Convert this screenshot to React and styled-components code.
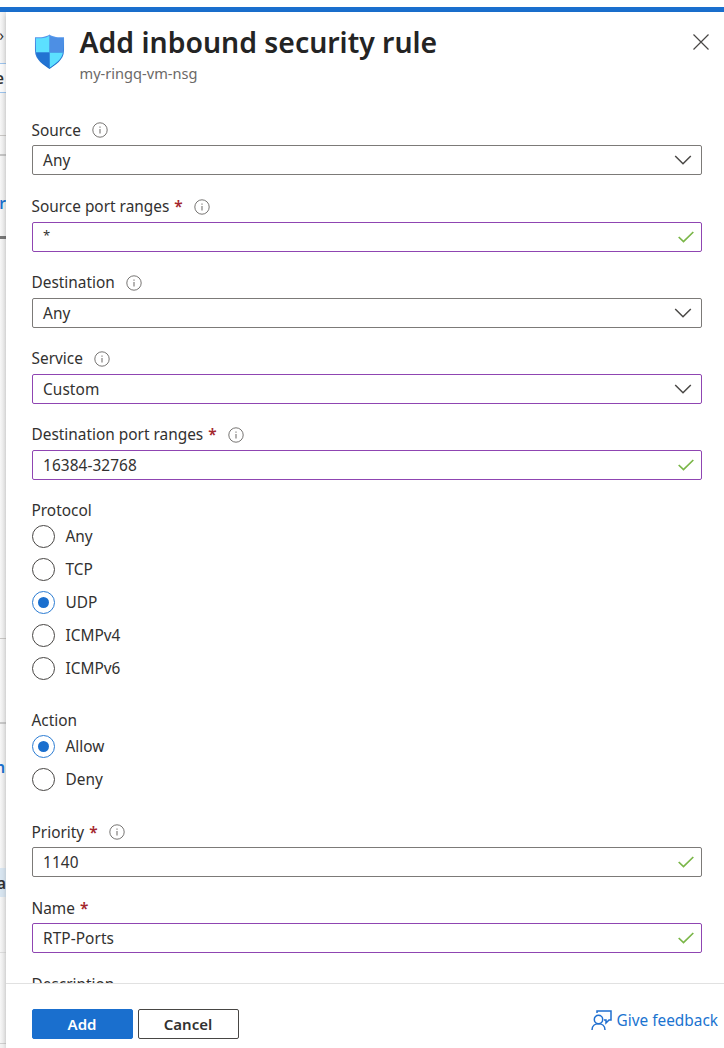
import React from 'react';
import styled, { createGlobalStyle } from 'styled-components';

const GlobalStyle = createGlobalStyle`
* { box-sizing: border-box; }
body {
  margin: 0;
  background: #fff;
  color: #323130;
  font-family: "Noto Sans", "Open Sans", sans-serif;
  font-size: 15.4px;
  line-height: 20px;
}
`

const Page = styled.div`
height: 1048px;
padding-top: 7px;
display: flex;
flex-direction: column;
overflow: hidden;
`

const TopBar = styled.div`
flex: none;
height: 5px;
background: #1a6fce;
`

const Main = styled.div`
flex: 1;
min-height: 0;
display: flex;
`

const Strip = styled.div`
width: 6px;
flex: none;
display: flex;
flex-direction: column;
overflow: hidden;
background: #f3f3f3;
`

const Slice = styled.div`
flex: none;
height: ${p => p.$h}px;
padding-top: ${p => p.$top || 0}px;
padding-right: ${p => p.$right || 0}px;
display: flex;
align-items: center;
justify-content: flex-end;
overflow: hidden;
background: ${p => p.$bg || 'linear-gradient(90deg, #f7f7f7, #e9e9e9)'};
border-bottom: ${p => p.$line || 'none'};
color: ${p => p.$color || '#323130'};
font-weight: ${p => p.$bold ? 600 : 400};
`

const Panel = styled.section`
flex: 1;
min-width: 0;
display: flex;
flex-direction: column;
background: #fff;
box-shadow: 0 3px 5px rgba(0, 0, 0, 0.2);
`

const Header = styled.header`
flex: none;
height: 105px;
padding: 22px 15px 0 27.5px;
display: flex;
align-items: flex-start;
`

const Titles = styled.div`
flex: 1;
margin-left: 15px;
margin-top: -9px;
`

const Title = styled.h1`
margin: 0;
font-size: 28.4px;
line-height: 34px;
font-weight: 600;
color: #242424;
white-space: nowrap;
`

const Subtitle = styled.div`
margin-top: 5px;
font-size: 14.6px;
line-height: 18px;
color: #6b6967;
`

const Close = styled.button`
margin: 0;
padding: 0;
border: 0;
background: none;
display: flex;
`

const Form = styled.div`
flex: 1;
min-height: 0;
overflow: hidden;
padding: 0 22px 0 25.5px;
`

const Field = styled.div`
height: ${p => p.$h}px;
`

const Label = styled.div`
height: 28px;
padding-bottom: 1px;
display: flex;
align-items: center;
white-space: nowrap;
`

const Star = styled.span`
margin-left: 5px;
color: #a4262c;
font-weight: 600;
`

const Info = styled.svg`
margin: 0 0 1px 11px;
`

const Box = styled.div`
height: 30px;
padding: 0 7px 0 10.5px;
display: flex;
align-items: center;
justify-content: space-between;
border: 1px solid ${p => p.$edited ? '#8f45b2' : '#7c7a78'};
border-radius: 2px;
`

const Value = styled.span`
padding-top: 1.5px;
letter-spacing: 0.08px;
`

const Wildcard = styled.span`
padding-bottom: 3px;
font-size: 13px;
`

const Group = styled.div`
height: ${p => p.$h}px;
padding-top: 3px;
`

const GroupLabel = styled.div`
height: 24.5px;
line-height: 20px;
`

const Option = styled.div`
height: 32.9px;
display: flex;
align-items: flex-start;
line-height: 24px;
`

const Circle = styled.span`
width: 23px;
height: 23px;
margin: 0 10.5px 0 0.5px;
border: 1.5px solid ${p => p.$on ? '#2b7cd3' : '#484644'};
border-radius: 50%;
display: flex;
align-items: center;
justify-content: center;
`

const Dot = styled.span`
width: 11px;
height: 11px;
border-radius: 50%;
background: #1a6fce;
`

const Footer = styled.footer`
flex: none;
height: 65.5px;
padding: 25.5px 6px 0 25.5px;
border-top: 1px solid #e1e1e1;
display: flex;
align-items: flex-start;
`

const Button = styled.button`
width: 101px;
height: 30px;
margin: 0 5px 0 0;
padding: 0 0 1px;
border: 1px solid ${p => p.$primary ? '#1a6fce' : '#484644'};
border-radius: 2px;
background: ${p => p.$primary ? '#1a6fce' : '#fff'};
color: ${p => p.$primary ? '#fff' : '#323130'};
font: 600 15px "Noto Sans", sans-serif;
`

const Feedback = styled.a`
margin-left: auto;
margin-top: 1px;
display: flex;
align-items: center;
gap: 4px;
color: #1a73d0;
white-space: nowrap;
`

const ChevronIcon = styled.svg`
margin-right: 2px;
`

function Shield() {
  return (
    <svg width="31" height="36" viewBox="0 0 32 37">
      <defs>
        <linearGradient id="edge" x1="0" y1="0" x2="0" y2="1">
          <stop offset="0" stopColor="#5a9bee" />
          <stop offset="1" stopColor="#1768c8" />
        </linearGradient>
        <clipPath id="inside">
          <path d="M16 1.7C12.3 4.4 7.2 4.4 2 4.4V17C2 26.2 10.8 31.2 16 35C21.2 31.2 30 26.2 30 17V4.4C24.8 4.4 19.7 4.4 16 1.7Z" />
        </clipPath>
      </defs>
      <path d="M16 .5C12.3 3.4 6.8 3.4 1 3.4V17C1 27 10.5 32 16 36C21.5 32 31 27 31 17V3.4C25.2 3.4 19.7 3.4 16 .5Z" fill="url(#edge)" />
      <g clipPath="url(#inside)">
        <path d="M0 0H16V19H0ZM16 19H32V37H16Z" fill="#5ce0ff" />
        <path d="M16 0H32V19H16Z" fill="#4d8fe4" />
        <path d="M0 19H16V37H0Z" fill="#2273d2" />
      </g>
    </svg>
  )
}

function InfoIcon() {
  return (
    <Info width="16" height="16" viewBox="0 0 16 16" fill="none" stroke="#777573">
      <circle cx="8" cy="8" r="7.2" />
      <path d="M8 7V11.5M8 4.6V5.8" strokeWidth="1.1" />
    </Info>
  )
}

function Chevron() {
  return (
    <ChevronIcon width="18" height="12" viewBox="0 0 18 12" fill="none" stroke="#4a4846" strokeWidth="1.5">
      <path d="M1.2 2L9 9.8L16.8 2" />
    </ChevronIcon>
  )
}

function Check() {
  return (
    <svg width="16" height="12" viewBox="0 0 16 12" fill="none" stroke="#7ab648" strokeWidth="1.7">
      <path d="M.7 6L5.5 10.6L15.3 1" />
    </svg>
  )
}

function FormField({ label, value, required, info, select, edited, height = 76 }) {
  return (
    <Field $h={height}>
      <Label>
        {label}
        {required && <Star>*</Star>}
        {info && <InfoIcon />}
      </Label>
      <Box $edited={edited}>
        {value === '*' ? <Wildcard>*</Wildcard> : <Value>{value}</Value>}
        {select ? <Chevron /> : <Check />}
      </Box>
    </Field>
  )
}

function RadioGroup({ label, options, selected, height }) {
  return (
    <Group $h={height}>
      <GroupLabel>{label}</GroupLabel>
      {options.map(option => (
        <Option key={option}>
          <Circle $on={option === selected}>{option === selected && <Dot />}</Circle>
          {option}
        </Option>
      ))}
    </Group>
  )
}

export default function App() {
  return (
    <Page>
      <GlobalStyle />
      <TopBar />
      <Main>
        <Strip>
          <Slice $h={48} $right={2}>›</Slice>
          <Slice $h={4} $line="1px solid #9cc3ec" />
          <Slice $h={29} $bg="#fafafa" $line="1px solid #9cc3ec" $top={2} $right={2} $bold>e</Slice>
          <Slice $h={43} $line="1px solid #c8c6c4" />
          <Slice $h={20} $line="2px solid #c4c4c4" />
          <Slice $h={83} $top={16} $color="#1a6fce" $line="3px solid #777" $bold>r</Slice>
          <Slice $h={400} $line="1px solid #c8c6c4" />
          <Slice $h={85} $line="2px solid #c8c8c8" />
          <Slice $h={84} $top={3} $color="#1a6fce" $right={1} $bold>n</Slice>
          <Slice $h={60} />
          <Slice $h={29} $top={2} $bg="#d8e5f0" $bold>a</Slice>
          <Slice $h={56} $line="1px solid #dcdcdc" />
          <Slice $h={91} $line="1px solid #d0d0d0" />
        </Strip>
        <Panel>
          <Header>
            <Shield />
            <Titles>
              <Title>Add inbound security rule</Title>
              <Subtitle>my-ringq-vm-nsg</Subtitle>
            </Titles>
            <Close aria-label="Close">
              <svg width="16" height="16" viewBox="0 0 16 16" stroke="#484644" strokeWidth="1.2">
                <path d="M.5 .5L15.5 15.5M15.5 .5L.5 15.5" />
              </svg>
            </Close>
          </Header>
          <Form>
            <FormField label="Source" value="Any" info select height={76.8} />
            <FormField label="Source port ranges" value="*" required info edited />
            <FormField label="Destination" value="Any" info select />
            <FormField label="Service" value="Custom" info select edited />
            <FormField label="Destination port ranges" value="16384-32768" required info edited />
            <RadioGroup label="Protocol" options={['Any', 'TCP', 'UDP', 'ICMPv4', 'ICMPv6']} selected="UDP" height={210} />
            <RadioGroup label="Action" options={['Allow', 'Deny']} selected="Allow" height={111.6} />
            <FormField label="Priority" value="1140" required info />
            <FormField label="Name" value="RTP-Ports" required edited />
            <Label>Description</Label>
          </Form>
          <Footer>
            <Button $primary>Add</Button>
            <Button>Cancel</Button>
            <Feedback>
              <svg width="21" height="21" viewBox="0 0 21 21" fill="none" stroke="#1f6fd0" strokeWidth="1.5">
                <circle cx="7.5" cy="9.5" r="4.2" />
                <path d="M1 20C1 16 4 13.8 7.5 13.8S14 16 14 20M6 3V1H20V10H18L15 13V10H13" />
              </svg>
              Give feedback
            </Feedback>
          </Footer>
        </Panel>
      </Main>
    </Page>
  )
}
